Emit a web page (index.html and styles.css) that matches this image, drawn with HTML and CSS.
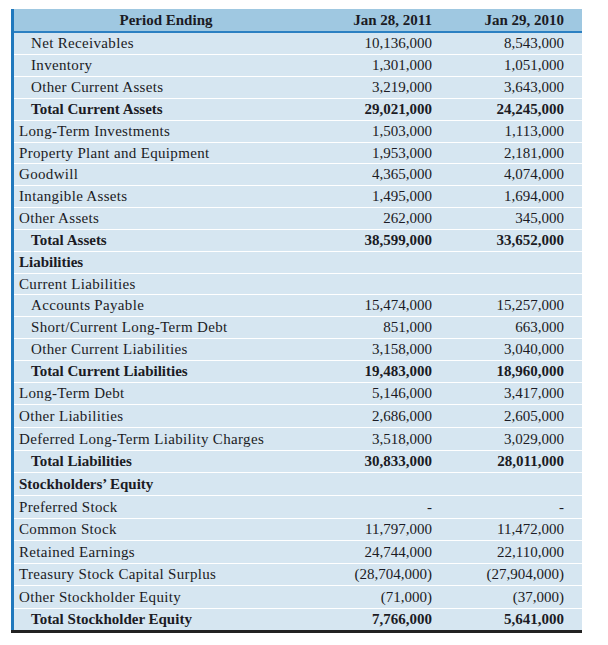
FILE: index.html
```html
<!DOCTYPE html>
<html>
<head>
<meta charset="utf-8">
<link rel="stylesheet" href="styles.css">
</head>
<body>
<table class="bs">
  <thead>
    <tr><th class="label">Period Ending</th><th class="num">Jan 28, 2011</th><th class="num">Jan 29, 2010</th></tr>
  </thead>
  <tbody>
    <tr><td class="label ind">Net Receivables</td><td class="num">10,136,000</td><td class="num">8,543,000</td></tr>
    <tr><td class="label ind">Inventory</td><td class="num">1,301,000</td><td class="num">1,051,000</td></tr>
    <tr><td class="label ind">Other Current Assets</td><td class="num">3,219,000</td><td class="num">3,643,000</td></tr>
    <tr class="total"><td class="label ind">Total Current Assets</td><td class="num">29,021,000</td><td class="num">24,245,000</td></tr>
    <tr><td class="label">Long-Term Investments</td><td class="num">1,503,000</td><td class="num">1,113,000</td></tr>
    <tr class="short"><td class="label">Property Plant and Equipment</td><td class="num">1,953,000</td><td class="num">2,181,000</td></tr>
    <tr><td class="label">Goodwill</td><td class="num">4,365,000</td><td class="num">4,074,000</td></tr>
    <tr><td class="label">Intangible Assets</td><td class="num">1,495,000</td><td class="num">1,694,000</td></tr>
    <tr><td class="label">Other Assets</td><td class="num">262,000</td><td class="num">345,000</td></tr>
    <tr class="total"><td class="label ind">Total Assets</td><td class="num">38,599,000</td><td class="num">33,652,000</td></tr>
    <tr class="total"><td class="label">Liabilities</td><td class="num"></td><td class="num"></td></tr>
    <tr class="short"><td class="label">Current Liabilities</td><td class="num"></td><td class="num"></td></tr>
    <tr><td class="label ind">Accounts Payable</td><td class="num">15,474,000</td><td class="num">15,257,000</td></tr>
    <tr><td class="label ind">Short/Current Long-Term Debt</td><td class="num">851,000</td><td class="num">663,000</td></tr>
    <tr><td class="label ind">Other Current Liabilities</td><td class="num">3,158,000</td><td class="num">3,040,000</td></tr>
    <tr class="total"><td class="label ind">Total Current Liabilities</td><td class="num">19,483,000</td><td class="num">18,960,000</td></tr>
    <tr><td class="label">Long-Term Debt</td><td class="num">5,146,000</td><td class="num">3,417,000</td></tr>
    <tr class="tall"><td class="label">Other Liabilities</td><td class="num">2,686,000</td><td class="num">2,605,000</td></tr>
    <tr class="tall"><td class="label">Deferred Long-Term Liability Charges</td><td class="num">3,518,000</td><td class="num">3,029,000</td></tr>
    <tr class="total"><td class="label ind">Total Liabilities</td><td class="num">30,833,000</td><td class="num">28,011,000</td></tr>
    <tr class="total tall"><td class="label">Stockholders’ Equity</td><td class="num"></td><td class="num"></td></tr>
    <tr class="tall"><td class="label">Preferred Stock</td><td class="num">-</td><td class="num">-</td></tr>
    <tr><td class="label">Common Stock</td><td class="num">11,797,000</td><td class="num">11,472,000</td></tr>
    <tr class="tall"><td class="label">Retained Earnings</td><td class="num">24,744,000</td><td class="num">22,110,000</td></tr>
    <tr><td class="label">Treasury Stock Capital Surplus</td><td class="num">(28,704,000)</td><td class="num">(27,904,000)</td></tr>
    <tr class="tall"><td class="label">Other Stockholder Equity</td><td class="num">(71,000)</td><td class="num">(37,000)</td></tr>
    <tr class="total"><td class="label ind">Total Stockholder Equity</td><td class="num">7,766,000</td><td class="num">5,641,000</td></tr>
  </tbody>
</table>
</body>
</html>
```
FILE: styles.css
```css
html, body {
  margin: 0;
  padding: 0;
  background: #ffffff;
}
body {
  padding: 9px 0 0 11px;
  font-family: "Liberation Serif", "Times New Roman", serif;
  font-size: 15px;
  color: #1b1b24;
}
.bs {
  border-collapse: collapse;
  width: 571px;
  border-left: 3px solid #1f78bd;
  border-bottom: 3px solid #222222;
}
.bs th {
  background: #9fc8e1;
  font-weight: bold;
  height: 22px;
  line-height: 22px;
  padding: 0;
  border-bottom: 2px solid #2c80c2;
}
.bs td {
  background: #d6e6f1;
  height: 21px;
  line-height: 21px;
  padding: 0;
  border-top: 1px solid #ffffff;
}
.bs tr.short td {
  height: 20px;
  line-height: 20px;
}
.bs tr.tall td {
  height: 22px;
  line-height: 22px;
}
.bs tbody tr:first-child td {
  border-top: 0;
}
.bs th.label {
  text-align: center;
  width: 304px;
}
.bs td.label {
  text-align: left;
  padding-left: 5px;
  letter-spacing: 0.33px;
}
.bs td.label.ind {
  padding-left: 17px;
}
.bs .num {
  text-align: right;
  padding-right: 18px;
}
.bs th.num {
  width: 114px;
}
.bs tr.total td {
  font-weight: bold;
  letter-spacing: 0;
}
```
